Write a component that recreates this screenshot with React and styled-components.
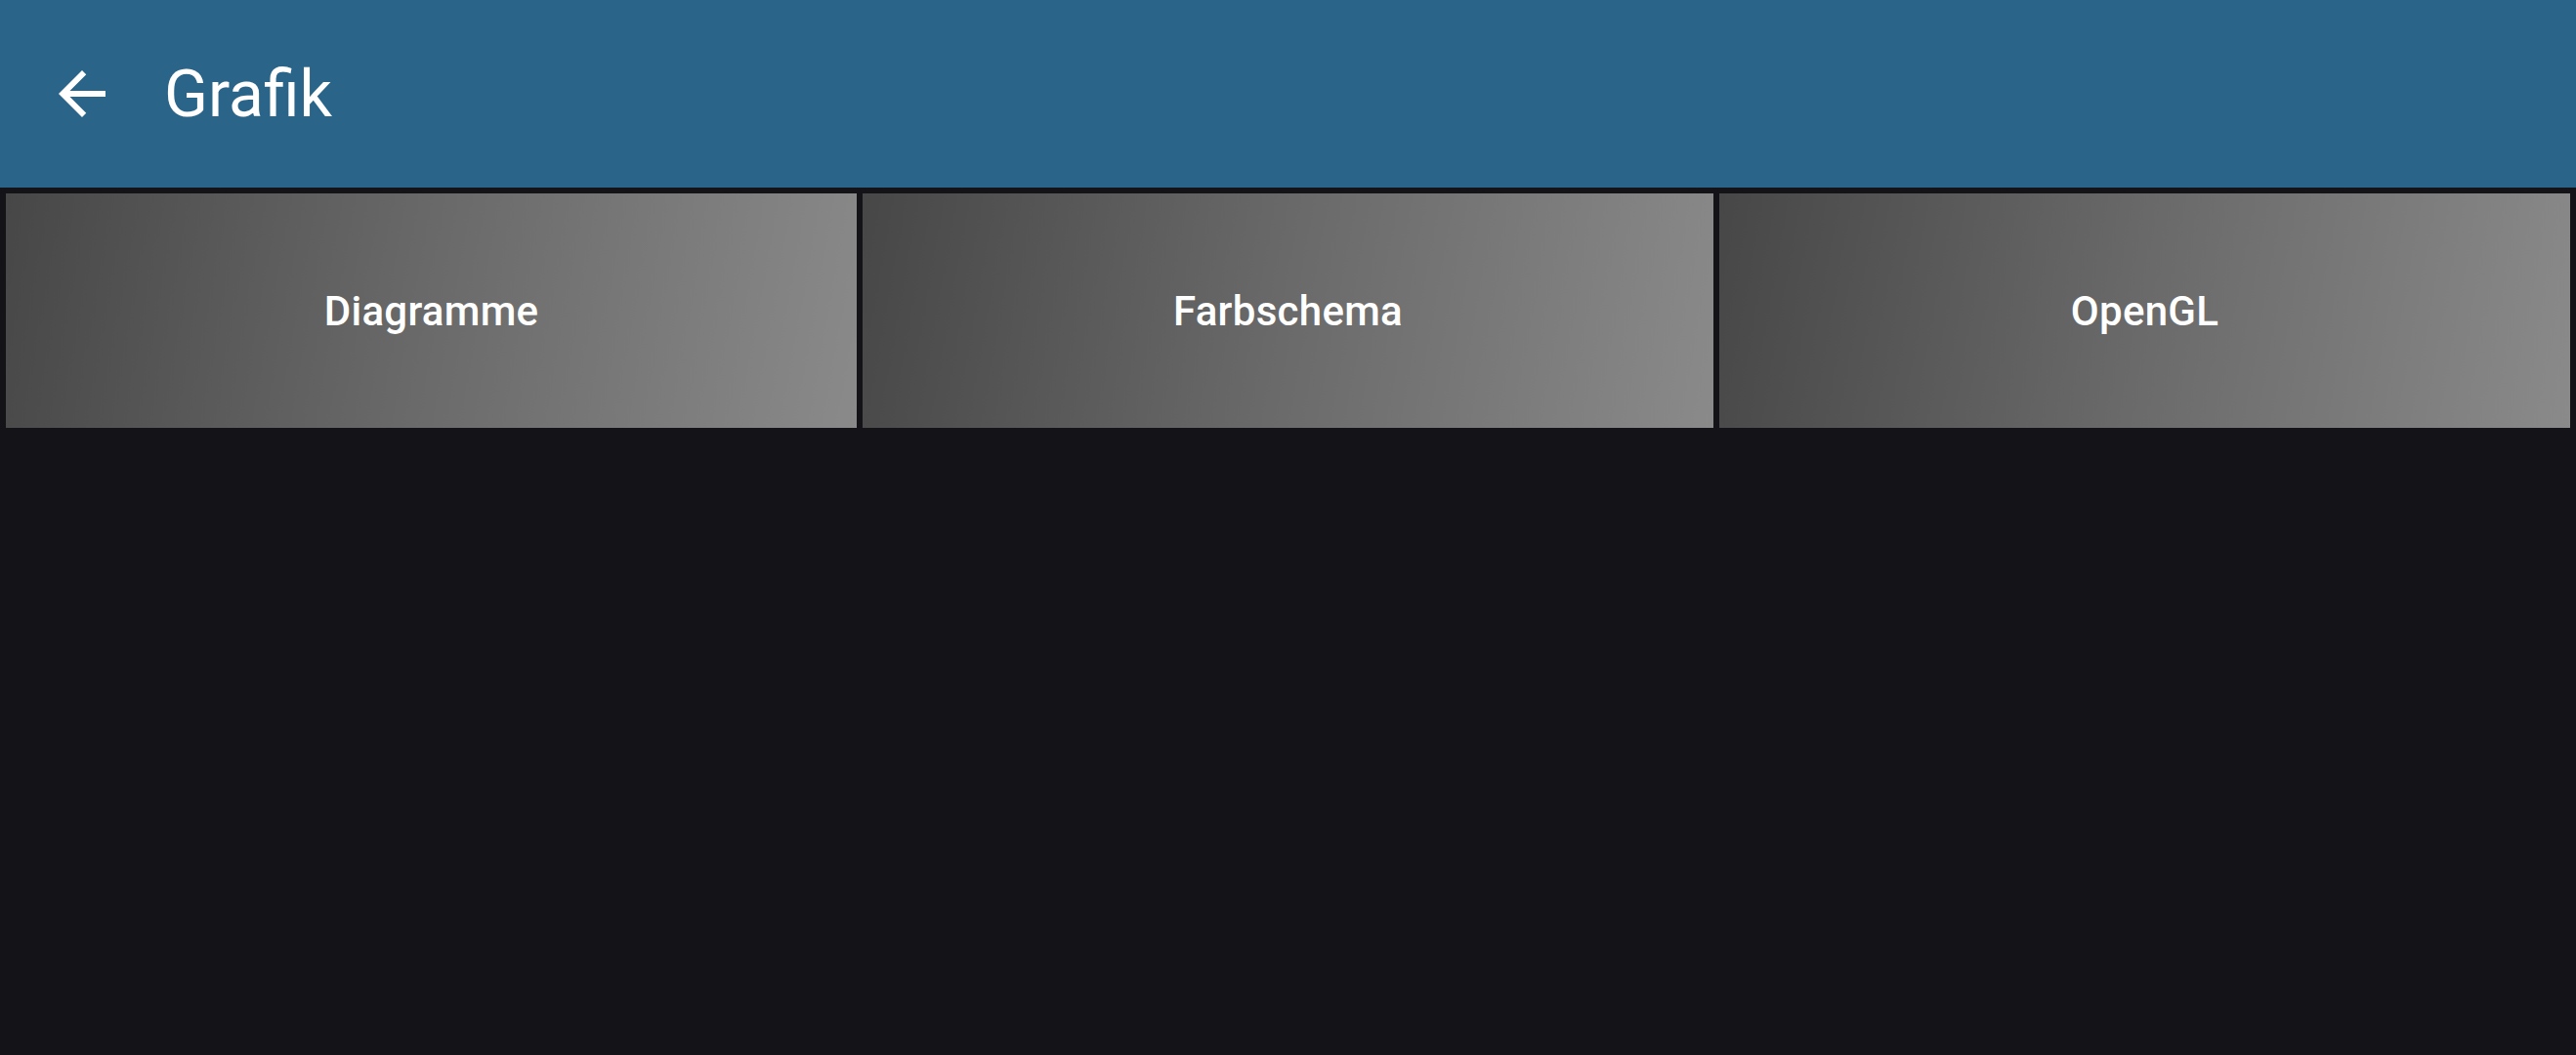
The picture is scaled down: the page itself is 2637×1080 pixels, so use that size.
import React from 'react';
import styled, { createGlobalStyle } from 'styled-components';

const GlobalStyle = createGlobalStyle`
  html, body {
    margin: 0;
    padding: 0;
    background: #141318;
  }
  body {
    font-family: Roboto, "Noto Sans", sans-serif;
  }
`;

const Page = styled.div`
  width: 100vw;
  height: 100vh;
  background: #141318;
  display: flex;
  flex-direction: column;
`;

const TopBar = styled.header`
  height: 192px;
  background: #2a6589;
  display: flex;
  align-items: center;
  padding-left: 48px;
  box-sizing: border-box;
`;

const BackButton = styled.button`
  width: 72px;
  height: 72px;
  padding: 0;
  border: none;
  background: transparent;
  color: #fff;
  display: flex;
  align-items: center;
  justify-content: center;
  cursor: pointer;
`;

const Title = styled.h1`
  margin: 0 0 0 48px;
  font-family: Roboto, sans-serif;
  font-weight: 400;
  font-size: 66px;
  color: #fff;
  letter-spacing: 0;
`;

const TileRow = styled.div`
  display: grid;
  grid-template-columns: repeat(3, 1fr);
  gap: 6px;
  padding: 6px;
`;

const Tile = styled.button`
  height: 240px;
  border: none;
  margin: 0;
  background: linear-gradient(100deg, #474747 0%, #6a6a6a 50%, #8a8a8a 100%);
  color: #fff;
  font-family: Roboto, sans-serif;
  font-weight: 500;
  font-size: 42px;
  letter-spacing: 0.3px;
  display: flex;
  align-items: center;
  justify-content: center;
  cursor: pointer;
`;

const ArrowBack = () => (
  <svg width="72" height="72" viewBox="0 0 24 24" fill="currentColor">
    <path d="M20 11H7.83l5.59-5.59L12 4l-8 8 8 8 1.41-1.41L7.83 13H20v-2z" />
  </svg>
);

const items = ['Diagramme', 'Farbschema', 'OpenGL'];

export default function App() {
  return (
    <Page>
      <GlobalStyle />
      <TopBar>
        <BackButton aria-label="Zurück">
          <ArrowBack />
        </BackButton>
        <Title>Grafik</Title>
      </TopBar>
      <TileRow>
        {items.map((label) => (
          <Tile key={label}>{label}</Tile>
        ))}
      </TileRow>
    </Page>
  );
}
